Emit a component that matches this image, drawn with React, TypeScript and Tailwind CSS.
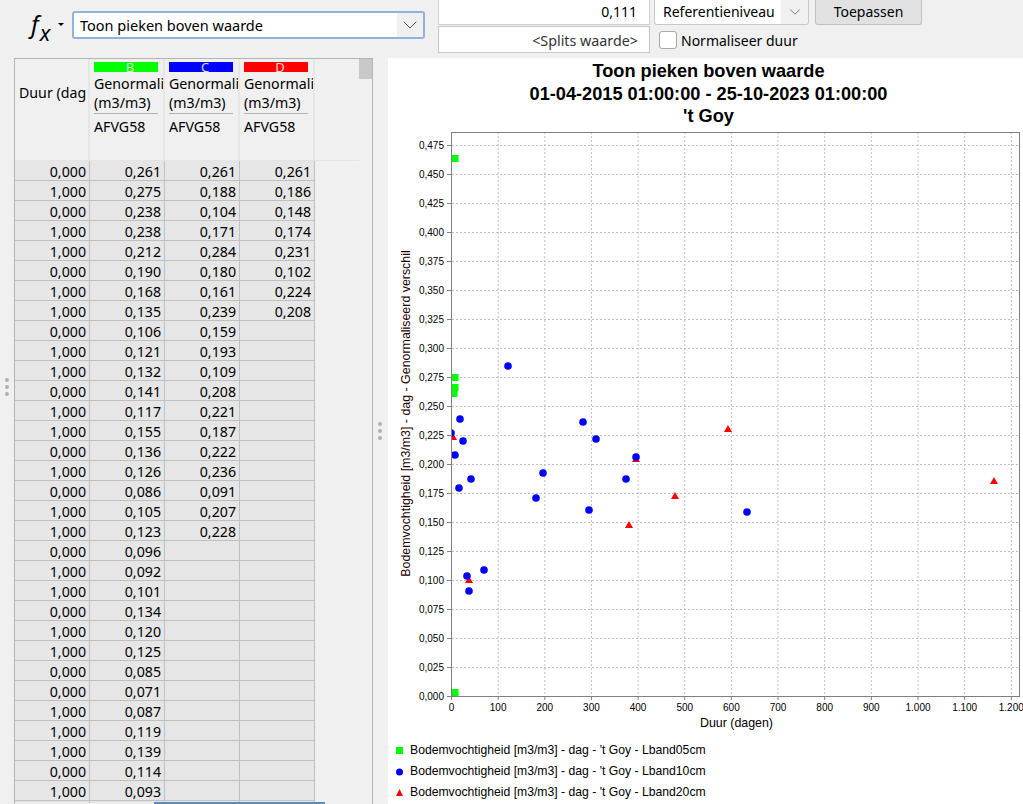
import { ChevronDown } from "lucide-react";

const rows = [
  ["0,000", "0,261", "0,261", "0,261"],
  ["1,000", "0,275", "0,188", "0,186"],
  ["0,000", "0,238", "0,104", "0,148"],
  ["1,000", "0,238", "0,171", "0,174"],
  ["1,000", "0,212", "0,284", "0,231"],
  ["0,000", "0,190", "0,180", "0,102"],
  ["1,000", "0,168", "0,161", "0,224"],
  ["1,000", "0,135", "0,239", "0,208"],
  ["0,000", "0,106", "0,159", ""],
  ["1,000", "0,121", "0,193", ""],
  ["1,000", "0,132", "0,109", ""],
  ["0,000", "0,141", "0,208", ""],
  ["1,000", "0,117", "0,221", ""],
  ["1,000", "0,155", "0,187", ""],
  ["0,000", "0,136", "0,222", ""],
  ["1,000", "0,126", "0,236", ""],
  ["0,000", "0,086", "0,091", ""],
  ["1,000", "0,105", "0,207", ""],
  ["1,000", "0,123", "0,228", ""],
  ["0,000", "0,096", "", ""],
  ["1,000", "0,092", "", ""],
  ["1,000", "0,101", "", ""],
  ["0,000", "0,134", "", ""],
  ["1,000", "0,120", "", ""],
  ["1,000", "0,125", "", ""],
  ["0,000", "0,085", "", ""],
  ["0,000", "0,071", "", ""],
  ["1,000", "0,087", "", ""],
  ["1,000", "0,119", "", ""],
  ["1,000", "0,139", "", ""],
  ["0,000", "0,114", "", ""],
  ["1,000", "0,093", "", ""],
];

const series = [
  { letter: "B", bar: "bg-[#00ff00]", ink: "text-[#d8ffd8]" },
  { letter: "C", bar: "bg-[#0000ff]", ink: "text-[#d8d8ff]" },
  { letter: "D", bar: "bg-[#ff0000]", ink: "text-[#ffd8d8]" },
];

const yTicks = Array.from({ length: 20 }, (_, i) => ({
  y: 696 - i * 29,
  label: "0," + String(i * 25).padStart(3, "0"),
}));

const xTicks = Array.from({ length: 13 }, (_, i) => ({
  x: 451.5 + i * 46.65,
  label: i >= 10 ? "1." + String((i - 10) * 100).padStart(3, "0") : String(i * 100),
}));

const green = [
  [455, 159],
  [455, 378],
  [455, 388],
  [454, 394],
  [455, 693],
];

const blue = [
  [451, 433], [455, 455], [459, 488], [460, 419], [463, 441], [471, 479],
  [467, 576], [469, 591], [484, 570], [508, 366], [536, 498], [543, 473],
  [583, 422], [589, 510], [596, 439], [626, 479], [636, 457], [747, 512],
];

const red = [
  [453, 437], [469, 580], [629, 525], [675, 496], [728, 429], [994, 481], [636, 459],
];

const tri = (x: number, y: number) => `${x},${y - 4} ${x + 4},${y + 3} ${x - 4},${y + 3}`;

const Chart = () => (
  <svg width="635" height="612" viewBox="388 125 635 612" className="block">
    <defs>
      <clipPath id="plot">
        <rect x="452" y="132" width="568" height="564" />
      </clipPath>
    </defs>
    {yTicks.map((t) => (
      <g key={t.y}>
        {t.y !== 696 && <line x1="452" x2="1020" y1={t.y + 0.5} y2={t.y + 0.5} stroke="#c0c0c0" strokeDasharray="2 2" />}
        <line x1="447" x2="451" y1={t.y + 0.5} y2={t.y + 0.5} stroke="#808080" />
        <text x="444" y={t.y + 3.5} textAnchor="end" fontSize="10" fontFamily="Liberation Sans" fill="#000">
          {t.label}
        </text>
      </g>
    ))}
    {xTicks.map((t) => (
      <g key={t.x}>
        {t.label !== "0" && <line x1={t.x} x2={t.x} y1="132" y2="696" stroke="#c0c0c0" strokeDasharray="2 2" />}
        <line x1={t.x} x2={t.x} y1="696" y2="700" stroke="#808080" />
        <text x={t.x} y="711" textAnchor="middle" fontSize="10" fontFamily="Liberation Sans" fill="#000">
          {t.label}
        </text>
      </g>
    ))}
    <rect x="451.5" y="132.5" width="568" height="564" fill="none" stroke="#808080" />
    <g clipPath="url(#plot)">
      {green.map(([x, y]) => (
        <rect key={`${x}-${y}`} x={x - 3} y={y - 4} width="6.5" height="7" fill="#00ff00" />
      ))}
      {red.map(([x, y]) => (
        <polygon key={`${x}-${y}`} points={tri(x, y)} fill="#ff0000" />
      ))}
      {blue.map(([x, y]) => (
        <circle key={`${x}-${y}`} cx={x} cy={y} r="3.8" fill="#0000ff" />
      ))}
    </g>
    <text x="736.5" y="727" textAnchor="middle" fontSize="12.4" fontFamily="Liberation Sans" fill="#000">
      Duur (dagen)
    </text>
    <text
      transform="translate(410 413.5) rotate(-90)"
      textAnchor="middle"
      fontSize="12.4"
      fontFamily="Liberation Sans"
      fill="#200"
    >
      Bodemvochtigheid [m3/m3] - dag - Genormaliseerd verschil
    </text>
  </svg>
);

const LegendRow = ({ icon, children }: { icon: React.ReactNode; children: string }) => (
  <div className="flex items-center h-[21px]">
    <svg width="8" height="8" viewBox="0 0 8 8" className="block ml-[8px] mr-[6px]">
      {icon}
    </svg>
    <span>{children}</span>
  </div>
);

const Dots = ({ className }: { className: string }) => (
  <div className={`absolute flex flex-col gap-[3px] ${className}`}>
    <div className="w-[4px] h-[4px] rounded-full bg-[#b0b0b0]" />
    <div className="w-[4px] h-[4px] rounded-full bg-[#b0b0b0]" />
    <div className="w-[4px] h-[4px] rounded-full bg-[#b0b0b0]" />
  </div>
);

export default function App() {
  return (
    <div className="relative w-[1023px] h-[804px] overflow-hidden bg-[#f0f0f0] font-['Noto_Sans',sans-serif] text-[14px] text-black">
      {/* top bar */}
      <div className="flex h-[58px]">
        <div className="flex items-start w-[72px] pt-[9px] pl-[31px]">
          <span className="italic text-[24px] leading-[30px]">f</span>
          <span className="italic text-[22px] leading-[22px] mt-[12px] ml-[1px]">x</span>
          <div className="mt-[14px] ml-[8px] w-0 h-0 border-x-[3px] border-x-transparent border-t-[3px] border-t-black" />
        </div>
        <div className="flex w-[353px] h-[28px] mt-[11px] bg-white border-2 border-[#8fb4dc] rounded-[3px]">
          <div className="flex-1 pl-[6px] leading-[25px] text-[14.5px]">Toon pieken boven waarde</div>
          <div className="flex items-center justify-center w-[26px] bg-[#f0f0f0]">
            <ChevronDown size={24} strokeWidth={1} className="text-[#555]" />
          </div>
        </div>
        <div className="flex flex-col ml-[13px] w-[212px] gap-[1px]">
          <div className="h-[25px] bg-white border border-t-0 border-[#d0d0d0] text-right pr-[12px] leading-[24px]">0,111</div>
          <div className="h-[27px] bg-white border border-[#c8c8c8] text-right pr-[11px] leading-[28px] text-[#333] text-[14.3px]">
            &lt;Splits waarde&gt;
          </div>
        </div>
        <div className="flex flex-col ml-[4px]">
          <div className="flex gap-[6px]">
            <div className="flex h-[25px] w-[155px] bg-white border border-t-0 border-[#c8c8c8] rounded-b-[3px]">
              <div className="flex-1 pl-[8px] leading-[24px] text-[14px]">Referentieniveau</div>
              <div className="flex items-center justify-center w-[27px] bg-[#f0f0f0] rounded-br-[3px]">
                <ChevronDown size={18} strokeWidth={1} className="text-[#555]" />
              </div>
            </div>
            <div className="h-[25px] w-[107px] bg-[#e1e1e1] border border-t-0 border-[#c0c0c0] rounded-b-[3px] text-center leading-[24px] text-[14px]">
              Toepassen
            </div>
          </div>
          <div className="flex items-center h-[27px] mt-[1px] pl-[5px]">
            <div className="w-[18px] h-[18px] bg-white border border-[#a8a8a8] rounded-[3px]" />
            <span className="ml-[4px] mt-[1px] text-[14px]">Normaliseer duur</span>
          </div>
        </div>
      </div>

      <div className="flex h-[746px]">
        {/* table pane */}
        <div className="relative w-[388px] pl-[14px]">
          <div className="relative flex flex-col w-[359px] h-[746px] border-l border-t border-r border-[#b4b4b4] text-[14.2px]">
            <div className="flex h-[102px] border-b border-[#e4e4e4] w-[344px]">
              <div className="w-[75px] pl-[4px] pt-[23px] border-r-2 border-[#e6e6e6] overflow-hidden whitespace-nowrap">
                Duur (dag
              </div>
              {series.map((s) => (
                <div key={s.letter} className="w-[75px] border-r-2 border-[#e6e6e6] pl-[4px] pt-[3px] overflow-hidden whitespace-nowrap">
                  <div className={`${s.bar} ${s.ink} w-[64px] h-[10px] text-[13px] leading-[10px] text-center pl-[8px]`}>{s.letter}</div>
                  <div className="leading-[19px] mt-[2px]">Genormali</div>
                  <div className="leading-[19px]">(m3/m3)</div>
                  <div className="w-[64px] h-[1px] bg-[#b4b4b4] mt-[1px]" />
                  <div className="leading-[20px] mt-[3px]">AFVG58</div>
                </div>
              ))}
            </div>
            {rows.map((row, i) => (
              <div key={i} className="flex h-[20px] shrink-0">
                {row.map((cell, j) => (
                  <div
                    key={j}
                    className="w-[75px] bg-[#e6e6e6] border-r border-b border-[#c0c0c0] text-right pr-[3px] leading-[21px]"
                  >
                    {cell}
                  </div>
                ))}
              </div>
            ))}
            <div className="flex h-[2px] shrink-0">
              {[0, 1, 2, 3].map((j) => (
                <div key={j} className="w-[75px] bg-[#e6e6e6] border-r border-[#c0c0c0]" />
              ))}
            </div>
            <div className="absolute top-0 right-0 w-[13px] h-[20px] bg-[#c8c8c8]" />
          </div>
          <Dots className="left-[5px] top-[320px]" />
          <Dots className="left-[378px] top-[364px]" />
        </div>

        {/* chart pane */}
        <div className="w-[635px] bg-white font-['Liberation_Sans',sans-serif]">
          <div className="h-[67px] pt-[2px] pl-[6px] text-center font-bold text-[18.2px] leading-[22.5px]">
            <div>Toon pieken boven waarde</div>
            <div>01-04-2015 01:00:00 - 25-10-2023 01:00:00</div>
            <div>'t Goy</div>
          </div>
          <Chart />
          <div className="text-[12.2px] pt-[3px]">
            <LegendRow icon={<rect x="0" y="0" width="7" height="7" fill="#00ff00" />}>
              Bodemvochtigheid [m3/m3] - dag - 't Goy - Lband05cm
            </LegendRow>
            <LegendRow icon={<circle cx="3.5" cy="4" r="3.5" fill="#0000ff" />}>
              Bodemvochtigheid [m3/m3] - dag - 't Goy - Lband10cm
            </LegendRow>
            <LegendRow icon={<polygon points="3.5,0 7,7 0,7" fill="#ff0000" />}>
              Bodemvochtigheid [m3/m3] - dag - 't Goy - Lband20cm
            </LegendRow>
          </div>
        </div>
      </div>

      <div className="absolute left-[154px] top-[802px] w-[171px] h-[2px] bg-[#5b8cc0]" />
    </div>
  );
}
